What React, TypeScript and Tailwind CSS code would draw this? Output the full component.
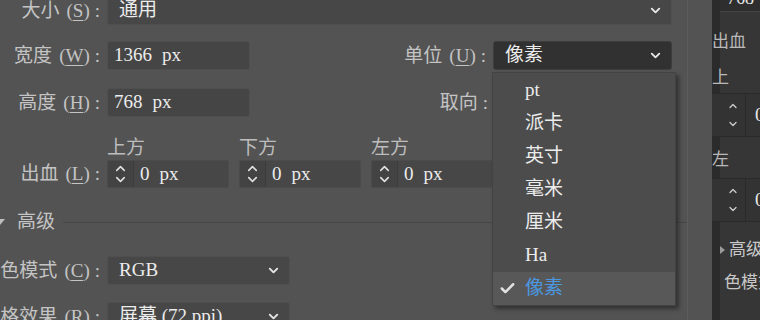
import React from 'react';
import { ChevronDown, ChevronUp, Check } from 'lucide-react';

const units = ['pt', '派卡', '英寸', '毫米', '厘米', 'Ha', '像素'];

const Label = ({ text, k, w = 'w-[100px]' }: { text: string; k?: string; w?: string }) => (
    <div className={`${w} shrink-0 flex justify-end whitespace-nowrap text-[19px] leading-[20px] text-[#c4c4c4]`}>
        <span>{text}</span>
        {k && (
            <span className="ml-[7px]">
                (<span className="underline underline-offset-[3px] decoration-1">{k}</span>)
            </span>
        )}
        <span className="ml-[5px]">:</span>
    </div>
);

const Select = ({ value, w, dark = false }: { value: string; w: string; dark?: boolean }) => (
    <div
        className={`${w} h-[29px] shrink-0 flex items-center justify-between pl-[11px] pr-[8px] rounded-[3px] border ${
            dark ? 'bg-[#313131] border-[#3d3d3d]' : 'bg-[#474747] border-[#4f4f4f]'
        }`}
    >
        <span className="text-[19px] text-[#ececec]">{value}</span>
        <ChevronDown size={15} strokeWidth={3} className="text-[#e6e6e6]" />
    </div>
);

const Input = ({ value }: { value: string }) => (
    <div className="w-[143px] h-[29px] shrink-0 flex items-center pl-[6px] rounded-[3px] bg-[#454545] border border-[#4f4f4f] text-[19px] text-[#ececec]">
        {value}
        <span className="ml-[10px]">px</span>
    </div>
);

const Stepper = ({ label }: { label: string }) => (
    <div className="flex flex-col">
        <div className="text-[19px] leading-[20px] text-[#bdbdbd] mb-[2px]">{label}</div>
        <div className="w-[122px] h-[28px] flex rounded-[2px] bg-[#474747] border border-[#4b4b4b]">
            <div className="w-[26px] flex flex-col items-center justify-center bg-[#434343] border-r border-[#3c3c3c] text-[#e0e0e0]">
                <ChevronUp size={15} strokeWidth={2.5} className="-mb-[2px]" />
                <ChevronDown size={15} strokeWidth={2.5} className="-mt-[2px]" />
            </div>
            <div className="flex items-center pl-[6px] text-[19px] text-[#ececec]">
                0<span className="ml-[10px]">px</span>
            </div>
        </div>
    </div>
);

const SideStepper = () => (
    <div className="h-[44px] flex border-y border-[#2a2a2a] bg-[#333333]">
        <div className="w-[34px] flex flex-col items-center justify-center gap-[6px] border-r border-[#2a2a2a] text-[#cfcfcf] pl-[8px]">
            <ChevronUp size={12} strokeWidth={2.5} />
            <ChevronDown size={12} strokeWidth={2.5} />
        </div>
        <div className="flex items-center pl-[9px] text-[19px] text-[#e8e8e8]">0</div>
    </div>
);

export default function App() {
    return (
        <div className="w-[760px] h-[320px] overflow-hidden bg-[#535353] flex font-['Liberation_Serif','Noto_Sans_CJK_SC',serif]">
            {/* dialog body */}
            <div className="relative w-[688px] shrink-0 border-r border-[#5c5c5c]">
                <div className="flex flex-col -mt-[4px]">
                    <div className="flex items-center gap-[7px]">
                        <Label text="大小" k="S" />
                        <Select value="通用" w="w-[565px]" />
                    </div>

                    <div className="flex items-center mt-[16px] w-[672px]">
                        <Label text="宽度" k="W" />
                        <div className="ml-[7px]">
                            <Input value="1366" />
                        </div>
                        <div className="flex-1 flex justify-end pr-[7px]">
                            <Label text="单位" k="U" w="w-auto" />
                        </div>
                        <Select value="像素" w="w-[179px]" dark />
                    </div>

                    <div className="flex items-center mt-[18px] w-[672px]">
                        <Label text="高度" k="H" />
                        <div className="ml-[7px]">
                            <Input value="768" />
                        </div>
                        <div className="flex-1 flex justify-end pr-[5px]">
                            <Label text="取向" w="w-auto" />
                        </div>
                        <div className="w-[179px] h-[29px]" />
                    </div>

                    <div className="flex items-end mt-[21px]">
                        <div className="h-[28px] flex items-center">
                            <Label text="出血" k="L" />
                        </div>
                        <div className="flex gap-[10px] ml-[7px]">
                            <Stepper label="上方" />
                            <Stepper label="下方" />
                            <Stepper label="左方" />
                        </div>
                    </div>

                    <div className="flex items-center mt-[24px] h-[20px]">
                        <div className="w-0 h-0 border-l-[5px] border-r-[5px] border-t-[6px] border-l-transparent border-r-transparent border-t-[#bdbdbd] -ml-[5px]" />
                        <span className="ml-[12px] text-[19px] text-[#c4c4c4]">高级</span>
                        <div className="flex-1 h-px bg-[#474747] ml-[8px]" />
                    </div>

                    <div className="flex items-center gap-[7px] mt-[24px]">
                        <Label text="色模式" k="C" />
                        <Select value="RGB" w="w-[183px]" />
                    </div>

                    <div className="flex items-center gap-[7px] mt-[17px]">
                        <Label text="栅格效果" k="R" />
                        <Select value="屏幕 (72 ppi)" w="w-[183px]" />
                    </div>
                </div>

                {/* unit dropdown */}
                <div className="absolute left-[492px] top-[72px] w-[184px] pt-[1px] bg-[#4c4c4c] border border-[#434343] shadow-[3px_3px_4px_rgba(0,0,0,0.4)] z-10">
                    {units.map((u, i) => {
                        const sel = i === units.length - 1;
                        return (
                            <div
                                key={u}
                                className={`h-[33px] flex items-center relative text-[19px] ${
                                    sel ? 'bg-[#585858] text-[#4b98e2]' : 'text-[#ececec]'
                                }`}
                            >
                                {sel && (
                                    <Check size={17} strokeWidth={3.5} className="absolute left-[6px] text-[#e2e2e2]" />
                                )}
                                <span className="pl-[32px]">{u}</span>
                            </div>
                        );
                    })}
                </div>
            </div>

            <div className="w-[24px] shrink-0" />

            {/* side panel */}
            <div className="flex-1 flex flex-col bg-[linear-gradient(to_right,#2b2b2b_8px,#363636_8px)] text-[#b9b9b9] text-[17px] leading-[20px]">
                <div className="h-[28px] -mt-[16px] ml-[8px] flex items-center pl-[7px] bg-[#2e2e2e] border-b border-[#444444] text-[#e8e8e8] text-[18px]">
                    768
                </div>
                <div className="mt-[20px]">出血</div>
                <div className="mt-[16px]">上</div>
                <div className="mt-[5px]">
                    <SideStepper />
                </div>
                <div className="mt-[13px]">左</div>
                <div className="mt-[8px]">
                    <SideStepper />
                </div>
                <div className="mt-[18px] flex items-center">
                    <div className="w-0 h-0 ml-[8px] border-t-[4px] border-b-[4px] border-l-[5px] border-t-transparent border-b-transparent border-l-[#9a9a9a]" />
                    <span className="ml-[4px] text-[#c8c8c8] whitespace-nowrap">高级</span>
                </div>
                <div className="mt-[13px] pl-[12px] whitespace-nowrap text-[#c8c8c8]">色模式</div>
            </div>
        </div>
    );
}
